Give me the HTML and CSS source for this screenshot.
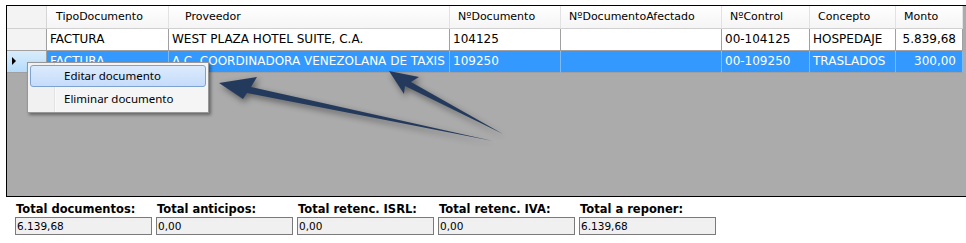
FILE: index.html
```html
<!DOCTYPE html>
<html lang="es">
<head>
    <meta charset="UTF-8">
    <title>Documentos</title>
    <link rel="stylesheet" href="styles.css">
</head>
<body>
    <div class="page">
        <!-- Grid de documentos -->
        <div class="grid">
            <div class="row head">
                <div class="cell rh"></div>
                <div class="cell h1">TipoDocumento</div>
                <div class="cell h2">Proveedor</div>
                <div class="cell">NºDocumento</div>
                <div class="cell">NºDocumentoAfectado</div>
                <div class="cell">NºControl</div>
                <div class="cell">Concepto</div>
                <div class="cell">Monto</div>
            </div>
            <div class="row">
                <div class="cell rh"></div>
                <div class="cell">FACTURA</div>
                <div class="cell">WEST PLAZA HOTEL SUITE, C.A.</div>
                <div class="cell">104125</div>
                <div class="cell"></div>
                <div class="cell">00-104125</div>
                <div class="cell">HOSPEDAJE</div>
                <div class="cell num">5.839,68</div>
            </div>
            <div class="row selected">
                <div class="cell rh"><span class="pointer"></span></div>
                <div class="cell">FACTURA</div>
                <div class="cell">A.C. COORDINADORA VENEZOLANA DE TAXIS</div>
                <div class="cell">109250</div>
                <div class="cell"></div>
                <div class="cell">00-109250</div>
                <div class="cell">TRASLADOS</div>
                <div class="cell num">300,00</div>
            </div>
        </div>

        <!-- Totales -->
        <div class="totals">
            <div class="field">
                <label>Total documentos:</label>
                <div class="box">6.139,68</div>
            </div>
            <div class="field">
                <label>Total anticipos:</label>
                <div class="box">0,00</div>
            </div>
            <div class="field">
                <label>Total retenc. ISRL:</label>
                <div class="box">0,00</div>
            </div>
            <div class="field">
                <label>Total retenc. IVA:</label>
                <div class="box">0,00</div>
            </div>
            <div class="field">
                <label>Total a reponer:</label>
                <div class="box">6.139,68</div>
            </div>
        </div>

        <!-- Menu contextual -->
        <div class="context-menu">
            <div class="item active">Editar documento</div>
            <div class="item">Eliminar documento</div>
        </div>

        <!-- Flechas -->
        <svg class="arrows" width="966" height="243" viewBox="0 0 966 243">
            <polygon points="219,83 257,77 251,87 493,141 247,93 243,99" />
            <polygon points="389,71 419,77 411,82 503,134 405,86 404,94" />
        </svg>
    </div>
</body>
</html>
```

FILE: styles.css
```css
/* General */
body {
    margin: 0;
    background-color: #ffffff;
    font-family: "DejaVu Sans", Verdana, sans-serif;
    font-size: 11px;
    color: #000;
}

.page {
    position: relative;
    width: 966px;
    height: 243px;
    overflow: hidden;
}

/* Grid */
.grid {
    margin: 5px 0 0 6px;
    height: 190px;
    border-top: 1px solid #000;
    border-left: 1px solid #000;
    border-bottom: 1px solid #000;
    background-color: #ababab;
}

.row {
    display: grid;
    grid-template-columns: 40px 122px 281px 111px 161px 88px 86px 67px;
    height: 22px;
    background-color: #fff;
    width: 956px;
    font-size: 12px;
}

.cell {
    box-sizing: border-box;
    border-right: 1px solid #a0a0a0;
    border-bottom: 1px solid #a0a0a0;
    padding: 0 3px;
    line-height: 21px;
    white-space: nowrap;
    overflow: hidden;
}

.cell.num {
    text-align: right;
    padding-right: 6px;
}

.row.head {
    height: 23px;
    font-size: 11px;
    background: linear-gradient(#ffffff, #f4f4f4);
}

.row.head .cell {
    line-height: 22px;
    padding-left: 8px;
    border-right-color: #e2e2e2;
    border-bottom-color: #d0d0d0;
}

.row.head .cell.h1 {
    padding-left: 9px;
}

.row.head .cell.h2 {
    padding-left: 16px;
}

.cell.rh {
    background-color: #f3f3f3;
    border-right-color: #a0a0a0;
}

.row.head .cell.rh {
    background-color: #f3f3f3;
    border-right-color: #d5d5d5;
}

.row.selected {
    background-color: #3399ff;
    color: #fff;
}

.row.selected .cell {
    border-right-color: #7fbaf5;
}

.row.selected .cell.rh {
    background: linear-gradient(#d9ecfb, #b5dcfa);
    border-right-color: #a0a0a0;
    position: relative;
}

.pointer {
    position: absolute;
    left: 5px;
    top: 6px;
    width: 0;
    height: 0;
    border-top: 4px solid transparent;
    border-bottom: 4px solid transparent;
    border-left: 4px solid #000;
}

/* Totales */
.totals {
    display: flex;
    gap: 4px;
    padding-left: 15px;
    margin-top: 5px;
}

.field {
    width: 137px;
}

.field label {
    display: block;
    font-weight: bold;
    font-size: 11.5px;
    line-height: 14px;
    padding-left: 1px;
    margin-bottom: 1px;
}

.field .box {
    box-sizing: border-box;
    height: 18px;
    border: 1px solid #7a7a7a;
    background-color: #f0f0f0;
    padding-left: 1px;
    line-height: 16px;
    font-size: 10.5px;
}

/* Menu contextual */
.context-menu {
    position: absolute;
    left: 27px;
    top: 62px;
    width: 182px;
    box-sizing: border-box;
    padding: 2px;
    border: 1px solid #979797;
    background: linear-gradient(90deg, #f1f1f1 0, #f1f1f1 26px, #e3e3e3 26px, #e3e3e3 27px, #ffffff 27px, #f5f5f5 28px);
    box-shadow: 2px 2px 3px rgba(0, 0, 0, 0.4);
    font-family: "Noto Sans", "Open Sans", sans-serif;
    font-size: 11.5px;
}

.context-menu .item {
    box-sizing: border-box;
    height: 22px;
    line-height: 20px;
    padding-left: 33px;
    border: 1px solid transparent;
    border-radius: 3px;
}

.context-menu .item + .item {
    margin-top: 1px;
}

.context-menu .item.active {
    background: linear-gradient(#dcebfc, #c4dcfb);
    border-color: #7da2ce;
}

/* Flechas */
.arrows {
    position: absolute;
    left: 0;
    top: 0;
    pointer-events: none;
    filter: drop-shadow(2px 3px 3px rgba(0, 0, 0, 0.45));
}

.arrows polygon {
    fill: #243a5c;
}
```
